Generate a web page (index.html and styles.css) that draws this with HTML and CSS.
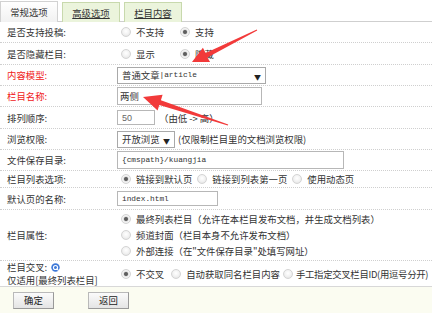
FILE: index.html
```html
<!DOCTYPE html>
<html lang="zh-CN">
<head>
	<meta charset="UTF-8">
	<title>栏目设置</title>
	<link rel="stylesheet" href="styles.css">
</head>
<body>
<div class="tabs">
	<span class="tab on">常规选项</span>
	<span class="tab"><u>高级选项</u></span>
	<span class="tab"><u>栏目内容</u></span>
</div>
<div class="form">
	<div class="row h21">
		<div class="lbl">是否支持投稿:</div>
		<div class="val">
			<label class="opt w59"><input type="radio" name="issend">不支持</label>
			<label class="opt w59"><input type="radio" name="issend" checked>支持</label>
		</div>
	</div>
	<div class="row h22">
		<div class="lbl">是否隐藏栏目:</div>
		<div class="val">
			<label class="opt w59"><input type="radio" name="ishidden">显示</label>
			<label class="opt w59"><input type="radio" name="ishidden" checked>隐藏</label>
		</div>
	</div>
	<div class="row h21">
		<div class="lbl red">内容模型:</div>
		<div class="val">
			<span class="sel model">普通文章<span class="en">|article</span></span>
		</div>
	</div>
	<div class="row h21">
		<div class="lbl red">栏目名称:</div>
		<div class="val">
			<span class="txt name">两侧</span>
		</div>
	</div>
	<div class="row h22">
		<div class="lbl">排列顺序:</div>
		<div class="val">
			<span class="txt rank">50</span>
			<span class="note">（由低 -&gt; 高）</span>
		</div>
	</div>
	<div class="row h21">
		<div class="lbl">浏览权限:</div>
		<div class="val">
			<span class="sel purview">开放浏览</span>
			<span class="note2">(仅限制栏目里的文档浏览权限)</span>
		</div>
	</div>
	<div class="row h21">
		<div class="lbl">文件保存目录:</div>
		<div class="val">
			<span class="txt dir en">{cmspath}/kuangjia</span>
		</div>
	</div>
	<div class="row h17">
		<div class="lbl">栏目列表选项:</div>
		<div class="val">
			<label class="opt"><input type="radio" name="isdefault" checked>链接到默认页</label>
			<label class="opt"><input type="radio" name="isdefault">链接到列表第一页</label>
			<label class="opt"><input type="radio" name="isdefault">使用动态页</label>
		</div>
	</div>
	<div class="row h22">
		<div class="lbl">默认页的名称:</div>
		<div class="val">
			<span class="txt defname en">index.html</span>
		</div>
	</div>
	<div class="row h51">
		<div class="lbl">栏目属性:</div>
		<div class="val col">
			<label class="opt"><input type="radio" name="ispart" checked>最终列表栏目（允许在本栏目发布文档，并生成文档列表）</label>
			<label class="opt"><input type="radio" name="ispart">频道封面（栏目本身不允许发布文档）</label>
			<label class="opt"><input type="radio" name="ispart">外部连接（在"文件保存目录"处填写网址）</label>
		</div>
	</div>
	<div class="row h26 last">
		<div class="lbl two">
			<span>栏目交叉: <svg class="help" width="9" height="9" viewBox="0 0 9 9"><circle cx="4.5" cy="4.5" r="4.2" fill="#3d78d8"/><circle cx="4.5" cy="4.5" r="2.6" fill="#fff"/><circle cx="4.5" cy="4.5" r="1.5" fill="#3d78d8"/><path d="M5.6 5.6 L7.6 7.6" stroke="#fff" stroke-width="1.2"/></svg></span>
			<span>仅适用[最终列表栏目]</span>
		</div>
		<div class="val tight">
			<label class="opt"><input type="radio" name="cross" checked>不交叉</label>
			<label class="opt"><input type="radio" name="cross">自动获取同名栏目内容</label>
			<label class="opt"><input type="radio" name="cross">手工指定交叉栏目ID(用逗号分开)</label>
		</div>
	</div>
</div>
<div class="foot">
	<button class="btn">确定</button>
	<button class="btn">返回</button>
</div>
<svg class="marks" width="432" height="313" viewBox="0 0 432 313">
	<polygon fill="#f23a3a" points="256.8,29.4 205.6,52.9 202.9,47.7 192,62 210.1,62 207.4,57.5 257.2,30.6"/>
	<polygon fill="#f23a3a" points="228.2,124.4 160.9,100.2 162.6,94.8 143,97 157.6,110.4 159.3,105 227.8,125.6"/>
</svg>
</body>
</html>
```

FILE: styles.css
```css
*{
	margin: 0;
	padding: 0;
	box-sizing: border-box;
}
body{
	width: 432px;
	height: 313px;
	overflow: hidden;
	position: relative;
	background: #fff;
	color: #333;
	font-family: "Noto Sans CJK SC", "Liberation Sans", sans-serif;
	font-size: 9.4px;
	line-height: 12px;
}
.tabs{
	height: 22px;
	display: flex;
	align-items: flex-end;
	gap: 4px;
	border-bottom: 1px solid #cfcfcf;
}
.tab{
	width: 58px;
	height: 20px;
	margin-bottom: -1px;
	display: flex;
	align-items: center;
	justify-content: center;
	background: #ebf4dc;
	border: 1px solid #c8d9ad;
	border-bottom: none;
	color: #333;
}
.tab.on{
	background: linear-gradient(#fff, #f1f1f1);
	border-color: #d2d2d2;
	height: 21px;
}
.row{
	display: flex;
	align-items: center;
	border-bottom: 1px dotted #cfcfcf;
}
.row.last{
	border-bottom: 1px solid #d8d8d8;
}
.h17{ height: 17px; }
.h21{ height: 21px; }
.h22{ height: 22px; }
.h26{ height: 26px; }
.h51{ height: 51px; }
.lbl{
	width: 117px;
	flex: none;
	padding-left: 7px;
}
.lbl.two{
	display: flex;
	flex-direction: column;
	gap: 1px;
}
.help{
	vertical-align: -1px;
	margin-left: 2px;
}
.red{
	color: #f01818;
}
.val{
	display: flex;
	align-items: center;
}
.val.col{
	flex-direction: column;
	align-items: flex-start;
}
.val.col .opt{
	height: 16px;
}
.opt{
	display: flex;
	align-items: center;
	margin-right: 1px;
	white-space: nowrap;
}
.w59{
	width: 59px;
	margin-right: 0;
}
.opt input{
	appearance: none;
	width: 10px;
	height: 10px;
	margin: 0 5px 0 4px;
	border-radius: 50%;
	border: 1px solid #d4d4d4;
	background: radial-gradient(circle at 50% 40%, #fff 0, #f2f2f2 50%, #dedede 100%);
	flex: none;
}
.opt input:checked{
	background: radial-gradient(circle, #555 0, #6a6a6a 1.6px, #e8e8e8 2.6px, #f5f5f5 3.4px, #dcdcdc 100%);
}
.tight .opt{
	margin-right: 0;
}
.tight .opt:nth-child(2) input{
	margin: 0 5px 0 7px;
}
.tight .opt:last-child{
	letter-spacing: -0.3px;
}
.tight .opt:last-child input{
	margin: 0 3px 0 3px;
}
.en{
	font-family: "Liberation Mono", monospace;
	font-size: 7.8px;
}
.txt, .sel{
	display: flex;
	align-items: center;
	background: #fff;
	border: 1px solid #b7b7b7;
	padding-left: 4px;
	white-space: nowrap;
}
.sel{
	position: relative;
	border-color: #a9a9a9;
}
.sel::after{
	content: "▼";
	position: absolute;
	right: 4px;
	top: 3px;
	font-size: 7px;
	color: #222;
}
.model{
	width: 149px;
	height: 17px;
}
.name{
	width: 145px;
	height: 18px;
	padding-left: 2px;
}
.rank{
	width: 38px;
	height: 15px;
	color: #666;
	font-family: "Liberation Sans", sans-serif;
	font-size: 9px;
}
.note{
	margin-left: 4px;
}
.purview{
	width: 58px;
	height: 17px;
}
.note2{
	margin-left: 3px;
}
.dir{
	width: 227px;
	height: 18px;
}
.defname{
	width: 101px;
	height: 15px;
}
.foot{
	height: 26px;
	background: #fbfcf1;
	display: flex;
	align-items: center;
	padding-left: 13px;
	gap: 34px;
}
.btn{
	width: 41px;
	height: 17px;
	font: inherit;
	color: #222;
	background: linear-gradient(#fbfbfb, #e4e4e4);
	border: 1px solid #b9b9b9;
	border-right-color: #999;
	border-bottom-color: #999;
}
.marks{
	position: absolute;
	left: 0;
	top: 0;
	pointer-events: none;
}
```
